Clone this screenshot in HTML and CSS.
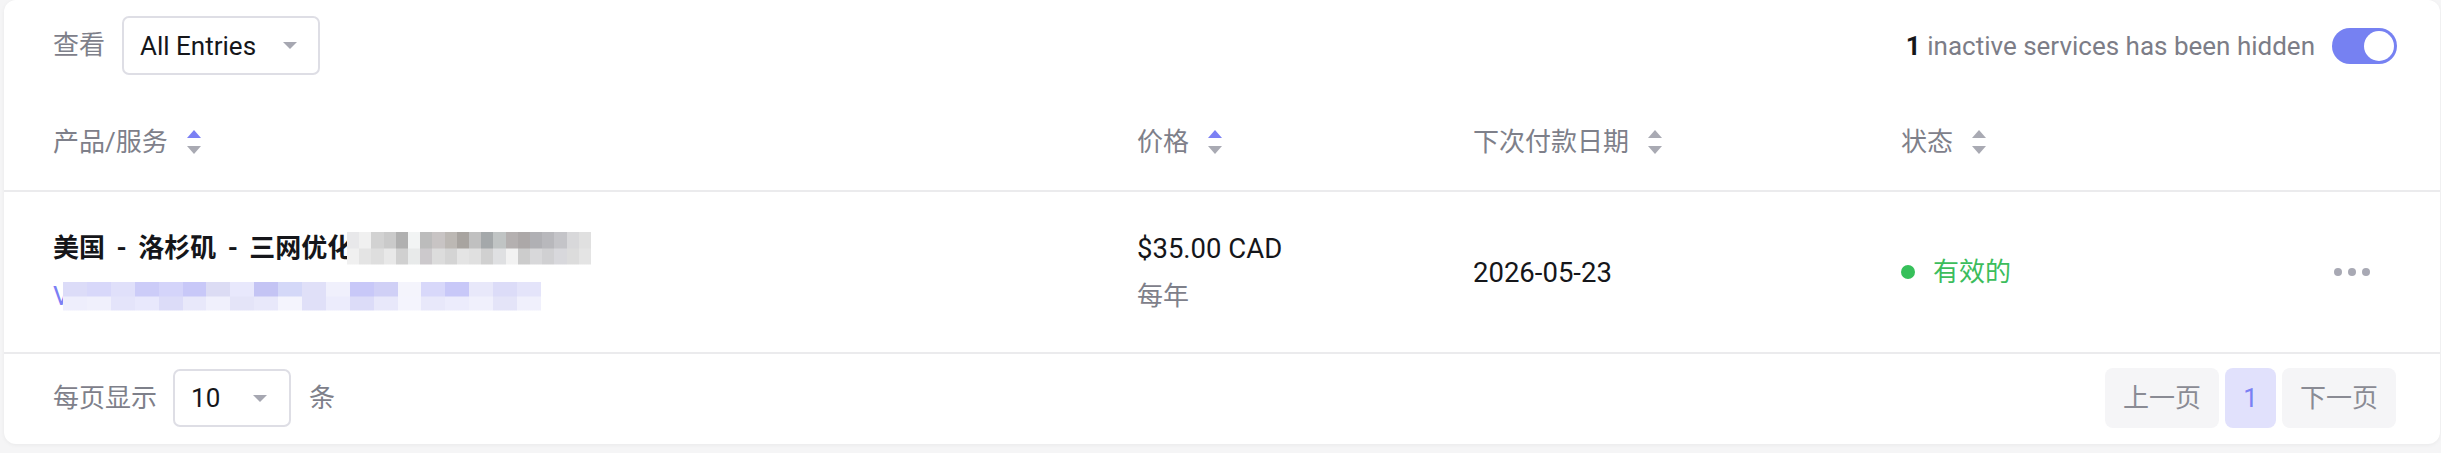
FILE: index.html
```html
<!DOCTYPE html>
<html lang="zh-CN">
<head>
<meta charset="utf-8">
<title>产品/服务</title>
<link rel="stylesheet" href="styles.css">
</head>
<body>
<div class="card">
  <div class="toolbar">
    <div class="filter">
      <span class="label">查看</span>
      <div class="select select-wide"><span>All Entries</span><span class="caret"></span></div>
    </div>
    <div class="hidden-note">
      <span><b>1</b> inactive services has been hidden</span>
      <span class="toggle"><span class="knob"></span></span>
    </div>
  </div>

  <div class="grid head">
    <div class="th">产品/服务 <svg class="sort" viewBox="0 0 14 24"><path class="up on" d="M7 0 L14 8 L0 8 Z"/><path class="down" d="M0 16 L14 16 L7 24 Z"/></svg></div>
    <div class="th">价格 <svg class="sort" viewBox="0 0 14 24"><path class="up on" d="M7 0 L14 8 L0 8 Z"/><path class="down" d="M0 16 L14 16 L7 24 Z"/></svg></div>
    <div class="th">下次付款日期 <svg class="sort" viewBox="0 0 14 24"><path class="up" d="M7 0 L14 8 L0 8 Z"/><path class="down" d="M0 16 L14 16 L7 24 Z"/></svg></div>
    <div class="th">状态 <svg class="sort" viewBox="0 0 14 24"><path class="up" d="M7 0 L14 8 L0 8 Z"/><path class="down" d="M0 16 L14 16 L7 24 Z"/></svg></div>
    <div></div>
  </div>

  <div class="grid row">
    <div class="cell stack">
      <div class="name"><span>美国 - 洛杉矶 - 三网优化</span><span class="mosaic mosaic-gray"></span></div>
      <div class="host"><span>V</span><span class="mosaic mosaic-blue"></span></div>
    </div>
    <div class="cell stack">
      <div class="price">$35.00 CAD</div>
      <div class="cycle">每年</div>
    </div>
    <div class="cell date">2026-05-23</div>
    <div class="cell status"><span class="dot"></span>有效的</div>
    <div class="cell actions"><span></span><span></span><span></span></div>
  </div>

  <div class="footer">
    <div class="perpage">
      <span class="label">每页显示</span>
      <div class="select select-small"><span>10</span><span class="caret"></span></div>
      <span class="label">条</span>
    </div>
    <div class="pager">
      <span class="pg">上一页</span>
      <span class="pg active">1</span>
      <span class="pg">下一页</span>
    </div>
  </div>
</div>
</body>
</html>
```
FILE: styles.css
```css
* { box-sizing: border-box; }
html, body { margin: 0; padding: 0; }
body {
  background: #f5f5f6;
  font-family: Roboto, "Noto Sans CJK SC", "Noto Sans", sans-serif;
  font-size: 26px;
  color: #15161a;
  width: 2441px;
  height: 453px;
  overflow: hidden;
}
.card {
  margin-left: 4px;
  width: 2436px;
  height: 444px;
  background: #fff;
  border-radius: 12px;
  box-shadow: 0 1px 4px rgba(0,0,0,0.05);
  display: flex;
  flex-direction: column;
}
.toolbar {
  display: flex;
  align-items: center;
  justify-content: space-between;
  padding: 16px 43px 0 49px;
}
.filter, .perpage { display: flex; align-items: center; }
.label { color: #7e808a; line-height: 39px; }
.select {
  display: flex;
  align-items: center;
  justify-content: space-between;
  border: 2px solid #dedee5;
  border-radius: 7px;
  background: #fff;
  color: #15161a;
}
.select-wide { width: 198px; height: 59px; margin-left: 17px; padding: 0 21px 0 16px; }
.select-small { width: 118px; height: 58px; margin: 0 18px 0 16px; padding: 0 22px 0 16px; }
.caret {
  width: 0; height: 0;
  border-left: 7px solid transparent;
  border-right: 7px solid transparent;
  border-top: 7px solid #a6a7b1;
}
.hidden-note { display: flex; align-items: center; gap: 17px; color: #7c7d87; }
.hidden-note b { color: #15161a; font-weight: 700; }
.toggle {
  width: 65px; height: 36px;
  border-radius: 18px;
  background: #7681f2;
  display: flex;
  align-items: center;
  justify-content: flex-end;
  padding-right: 3px;
}
.knob { width: 30px; height: 30px; border-radius: 50%; background: #fff; }

.grid {
  display: grid;
  grid-template-columns: 1084px 336px 428px 1fr 63px;
  padding: 0 43px 0 49px;
}
.head {
  padding-top: 52px;
  height: 117px;
  border-bottom: 2px solid #ebebed;
}
.th {
  display: flex;
  align-items: center;
  gap: 19px;
  color: #7e808a;
  line-height: 30px;
  height: 30px;
}
.sort { width: 14px; height: 24px; flex: none; }
.sort path { fill: #a9aab3; }
.sort path.on { fill: #7b80f4; }

.row {
  height: 162px;
  border-bottom: 2px solid #ebebed;
  align-items: center;
}
.cell { line-height: 39px; }
.stack { display: flex; flex-direction: column; gap: 9px; }
.name { display: flex; align-items: center; font-weight: 700; word-spacing: 5px; color: #15161a; }
.host { display: flex; align-items: center; color: #7b80f4; }
.mosaic { display: inline-block; }
.mosaic-gray {
  width: 244px; height: 33px; margin-left: -6px;
  background:
    linear-gradient(90deg, #e8e8ea 0 5%, #f0f0f0 5% 10%, #d2d2d2 10% 15%, #cacaca 15% 20%, #b0b0b0 20% 25%, #f2f4f4 25% 30%, #bcbcbc 30% 35%, #c8c4c4 35% 40%, #bcb8b4 40% 45%, #a8a4a0 45% 50%, #c0c0c0 50% 55%, #a4a8aa 55% 60%, #c0c4c4 60% 65%, #b4b0b0 65% 70%, #aca8a8 70% 75%, #b0b0b4 75% 80%, #b8b8bc 80% 85%, #c4c4c8 85% 90%, #d8d8da 90% 95%, #e0e0e0 95% 100%) top / 100% 50% no-repeat,
    linear-gradient(90deg, #f0f0f0 0 5%, #e4e4e4 5% 10%, #dedede 10% 15%, #e8e8e8 15% 20%, #d0d0d0 20% 25%, #e8eaea 25% 30%, #ccc9cc 30% 35%, #dcdcdc 35% 40%, #d4d4d4 40% 45%, #e4e4e4 45% 50%, #e0e0e0 50% 55%, #d0d0d0 55% 60%, #dfe0e2 60% 65%, #f2f2f2 65% 70%, #cccccc 70% 75%, #d8d8da 75% 80%, #d0d0d2 80% 85%, #d8d8dc 85% 90%, #dcdcdc 90% 95%, #e4e4e4 95% 100%) bottom / 100% 50% no-repeat;
}
.mosaic-blue {
  width: 478px; height: 29px; margin-left: -7px;
  background:
    linear-gradient(90deg, #dcdcf8 0 5%, #d8d8fa 5% 10%, #e0e0fa 10% 15%, #ccccf8 15% 20%, #d4d4fa 20% 25%, #c8c8f8 25% 30%, #dcdcf4 30% 35%, #e8e8fc 35% 40%, #c4c4f4 40% 45%, #d4d8f8 45% 50%, #e0e0f8 50% 55%, #f0f0fc 55% 60%, #c8c8f8 60% 65%, #d0d0f6 65% 70%, #f4f4fc 70% 75%, #d8d8fa 75% 80%, #c8c8f8 80% 85%, #e8e8fa 85% 90%, #dcdcf8 90% 95%, #e4e4fa 95% 100%) top / 100% 50% no-repeat,
    linear-gradient(90deg, #eeeefc 0 5%, #f0f0fc 5% 10%, #e4e4fa 10% 15%, #e8e8fc 15% 20%, #dcdcf8 20% 25%, #e8e8fa 25% 30%, #f0f0fc 30% 35%, #e4e4f8 35% 40%, #e8e8fa 40% 45%, #f4f4fd 45% 50%, #e0e0f8 50% 55%, #ececfc 55% 60%, #dcdcf8 60% 65%, #e8e8fa 65% 70%, #f4f4fd 70% 75%, #e8e8fa 75% 80%, #ececfc 80% 85%, #f0f0fc 85% 90%, #e4e4f8 90% 95%, #f0f0fc 95% 100%) bottom / 100% 50% no-repeat;
}
.price { color: #15161a; font-size: 27.5px; }
.cycle { color: #7e808a; }
.date { color: #15161a; font-size: 27.5px; }
.status { display: flex; align-items: center; gap: 18px; color: #3cbd5c; }
.dot { width: 14px; height: 14px; border-radius: 50%; background: #36c05a; }
.actions { display: flex; align-items: center; gap: 6px; }
.actions span { width: 8px; height: 8px; border-radius: 50%; background: #a8a9b4; }

.footer {
  display: flex;
  align-items: center;
  justify-content: space-between;
  flex: 1;
  padding: 0 44px 2px 49px;
}
.pager { display: flex; gap: 6px; }
.pg {
  height: 60px;
  line-height: 60px;
  padding: 0 18px;
  border-radius: 8px;
  background: #f5f5f7;
  color: #8a8b94;
}
.pg.active {
  width: 51px;
  padding: 0;
  text-align: center;
  background: #e1e1fc;
  color: #7b80f4;
}
```
